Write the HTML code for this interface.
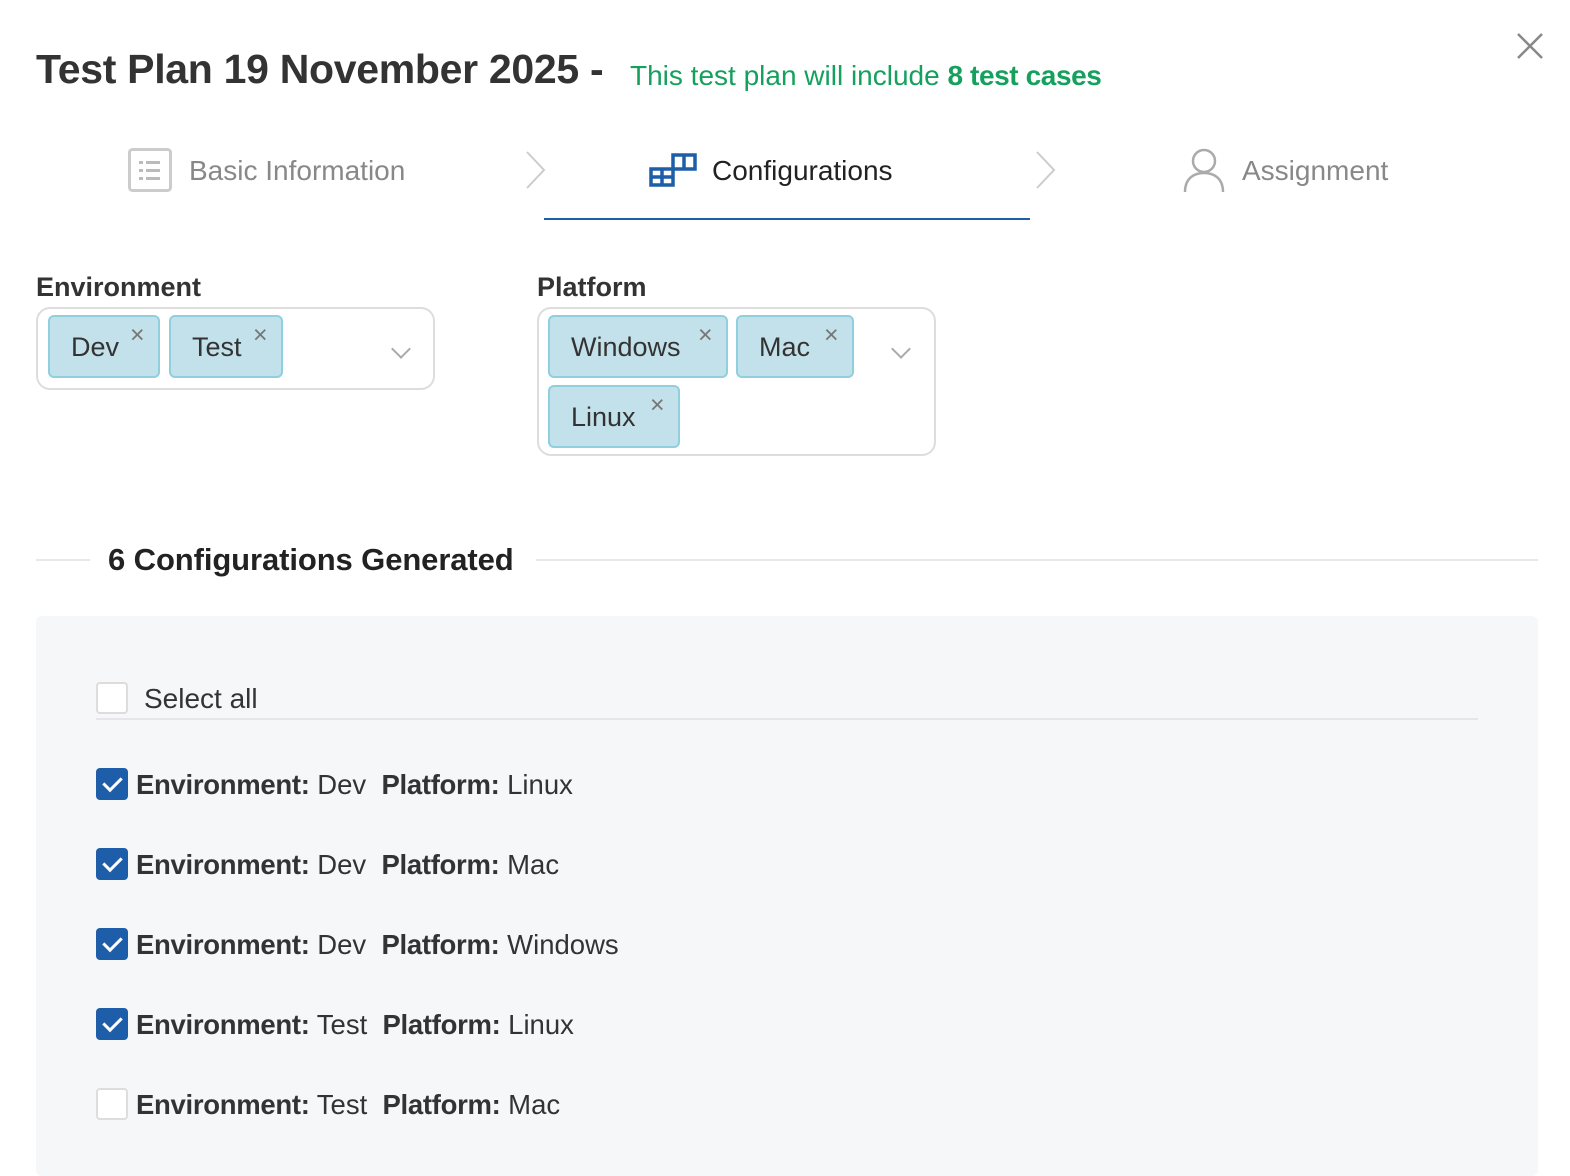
<!DOCTYPE html>
<html><head><meta charset="utf-8"><style>
*{box-sizing:border-box;margin:0;padding:0}
body{width:1570px;height:1160px;background:#fff;font-family:"Liberation Sans",sans-serif;color:#333;position:relative;overflow:hidden}
.a{position:absolute;white-space:nowrap}
.tag{position:absolute;height:63px;background:#c2e1ea;border:2px solid #8fcfde;border-radius:6px;font-size:27px;color:#333;line-height:61px;padding-left:21px}
.tag .x{position:absolute;top:-12px;font-size:25px;color:#777}
.box{position:absolute;border:2px solid #ddd;border-radius:14px}
.chev{position:absolute;width:14px;height:14px;border-right:2px solid #aaa;border-bottom:2px solid #aaa;transform:rotate(45deg)}
.cb{position:absolute;left:96px;width:32px;height:32px;border-radius:4px}
.cb.on{background:#1e5ea8}
.cb.off{background:#fff;border:2px solid #ddd}
.cb.on:after{content:"";position:absolute;left:11px;top:5px;width:8px;height:15px;border-right:3px solid #fff;border-bottom:3px solid #fff;transform:rotate(45deg)}
.row{position:absolute;left:136px;font-size:27.5px;color:#333}
.row b{font-weight:bold;letter-spacing:-0.3px}
</style></head><body>
<div class="a" style="left:36px;top:46px;font-size:41px;font-weight:bold;color:#333;letter-spacing:-0.3px">Test Plan 19 November 2025 -</div>
<div class="a" style="left:630px;top:60px;font-size:28px;color:#16a05e">This test plan will include <b style="letter-spacing:-0.4px">8 test cases</b></div>
<svg class="a" style="left:1516px;top:32px" width="28" height="28"><path d="M2 2L26 26M26 2L2 26" stroke="#888" stroke-width="2.5"/></svg>

<svg class="a" style="left:128px;top:148px" width="44" height="44"><rect x="1.5" y="1.5" width="41" height="41" rx="3" fill="none" stroke="#ccc" stroke-width="3"/><g fill="#bbb"><rect x="11" y="13" width="4" height="3"/><rect x="18" y="13" width="14" height="3"/><rect x="11" y="21" width="4" height="3"/><rect x="18" y="21" width="14" height="3"/><rect x="11" y="29" width="4" height="3"/><rect x="18" y="29" width="14" height="3"/></g></svg>
<div class="a" style="left:189px;top:155px;font-size:28px;color:#888">Basic Information</div>
<svg class="a" style="left:524px;top:150px" width="24" height="40"><path d="M3 2L20 20L3 38" fill="none" stroke="#ccc" stroke-width="2"/></svg>
<svg class="a" style="left:649px;top:153px" width="48" height="34"><path d="M2 16H24V32H2ZM13 16V32M2 24H24M24 16V2H46V16H24M35 2V16" fill="none" stroke="#1e5ea8" stroke-width="3.5"/></svg>
<div class="a" style="left:712px;top:155px;font-size:28px;color:#222">Configurations</div>
<div class="a" style="left:544px;top:218px;width:486px;height:2px;background:#1e5ea8"></div>
<svg class="a" style="left:1034px;top:150px" width="24" height="40"><path d="M3 2L20 20L3 38" fill="none" stroke="#ccc" stroke-width="2"/></svg>
<svg class="a" style="left:1182px;top:147px" width="44" height="46"><circle cx="22" cy="14" r="11" fill="none" stroke="#aaa" stroke-width="2.5"/><path d="M3 45C3 32 11 26 22 26S41 32 41 45" fill="none" stroke="#aaa" stroke-width="2.5"/></svg>
<div class="a" style="left:1242px;top:155px;font-size:28px;color:#888">Assignment</div>

<div class="a" style="left:36px;top:272px;font-size:27px;font-weight:bold;color:#333">Environment</div>
<div class="box" style="left:36px;top:307px;width:399px;height:83px"></div>
<div class="tag" style="left:48px;top:315px;width:112px">Dev<span class="x" style="left:80px">×</span></div>
<div class="tag" style="left:169px;top:315px;width:114px">Test<span class="x" style="left:82px">×</span></div>
<div class="chev" style="left:394px;top:342px"></div>

<div class="a" style="left:537px;top:272px;font-size:27px;font-weight:bold;color:#333">Platform</div>
<div class="box" style="left:537px;top:307px;width:399px;height:149px"></div>
<div class="tag" style="left:548px;top:315px;width:180px">Windows<span class="x" style="left:148px">×</span></div>
<div class="tag" style="left:736px;top:315px;width:118px">Mac<span class="x" style="left:86px">×</span></div>
<div class="tag" style="left:548px;top:385px;width:132px">Linux<span class="x" style="left:100px">×</span></div>
<div class="chev" style="left:894px;top:342px"></div>

<div class="a" style="left:36px;top:559px;width:54px;height:2px;background:#e8e8e8"></div>
<div class="a" style="left:108px;top:542px;font-size:31px;font-weight:bold;color:#222;letter-spacing:-0.1px">6 Configurations Generated</div>
<div class="a" style="left:536px;top:559px;width:1002px;height:2px;background:#e8e8e8"></div>

<div class="a" style="left:36px;top:616px;width:1502px;height:560px;background:#f6f7f9;border-radius:6px"></div>
<div class="cb off" style="top:682px"></div>
<div class="row" style="left:144px;top:683px;font-size:28px">Select all</div>
<div class="a" style="left:96px;top:718px;width:1382px;height:2px;background:#e6e6e8"></div>

<div class="cb on" style="top:768px"></div><div class="row" style="top:769px"><b>Environment:</b> Dev&nbsp; <b>Platform:</b> Linux</div>
<div class="cb on" style="top:848px"></div><div class="row" style="top:849px"><b>Environment:</b> Dev&nbsp; <b>Platform:</b> Mac</div>
<div class="cb on" style="top:928px"></div><div class="row" style="top:929px"><b>Environment:</b> Dev&nbsp; <b>Platform:</b> Windows</div>
<div class="cb on" style="top:1008px"></div><div class="row" style="top:1009px"><b>Environment:</b> Test&nbsp; <b>Platform:</b> Linux</div>
<div class="cb off" style="top:1088px"></div><div class="row" style="top:1089px"><b>Environment:</b> Test&nbsp; <b>Platform:</b> Mac</div>
</body></html>
